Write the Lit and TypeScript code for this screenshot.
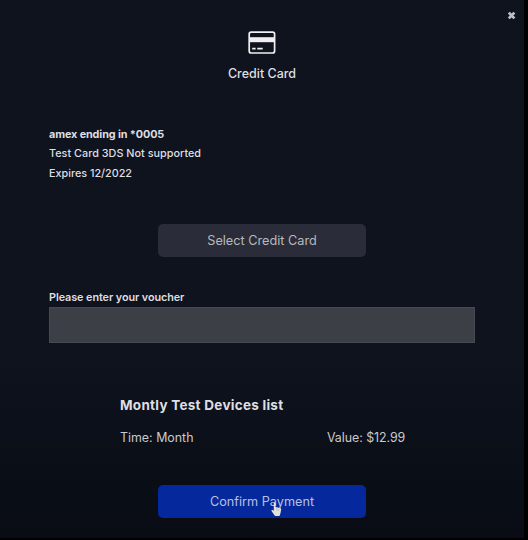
import { LitElement, html, css } from "lit";
import { customElement } from "lit/decorators.js";

@customElement("app-root")
export class AppRoot extends LitElement {
  static styles = css`
    :host {
      display: block;
      height: 540px;
      background: #000;
      font-family: Inter, "Open Sans", sans-serif;
      color: #dedfe2;
      overflow: hidden;
    }
    * {
      box-sizing: border-box;
    }
    .dialog {
      position: relative;
      display: flex;
      flex-direction: column;
      width: 524px;
      height: 538px;
      padding: 31px 49px 0;
      background: linear-gradient(#0f131e 0%, #0f131e 65%, #0a0e17 88%, #090c14 100%);
      white-space: nowrap;
    }
    .close {
      position: absolute;
      top: 11px;
      right: 8px;
      width: 9px;
      height: 9px;
      padding: 0;
      border: 0;
      background: none;
      color: #bfc0c4;
      display: flex;
    }
    .header {
      display: flex;
      flex-direction: column;
      align-items: center;
      height: 94px;
    }
    .title {
      margin-top: 10px;
      font-size: 12.5px;
      font-weight: 500;
      line-height: 18px;
    }
    .card {
      height: 99px;
      font-size: 10.8px;
      font-weight: 500;
      line-height: 19px;
    }
    .number {
      font-weight: 700;
      letter-spacing: -0.1px;
    }
    .holder {
      letter-spacing: 0.03px;
    }
    .expiry {
      margin-top: 1px;
    }
    .btn {
      align-self: center;
      display: flex;
      align-items: center;
      justify-content: center;
      flex: none;
      width: 208px;
      height: 33px;
      padding: 0;
      border: 0;
      border-radius: 5px;
      font: 400 12.7px/18px Inter, "Open Sans", sans-serif;
    }
    .select {
      padding-top: 1px;
      background: #2a2c39;
      color: #b9babd;
    }
    .confirm {
      position: relative;
      margin-top: 37px;
      background: #05289c;
      color: #b8c0e0;
    }
    .label {
      margin-top: 32px;
      font-size: 10.8px;
      font-weight: 600;
      line-height: 18px;
      letter-spacing: -0.06px;
    }
    .voucher {
      flex: none;
      width: 426px;
      height: 36px;
      padding: 0 10px;
      border: 1px solid #454950;
      border-radius: 0;
      background: #3c3f45;
      color: inherit;
    }
    .plan {
      margin: 52px 0 0 71px;
      height: 53px;
    }
    .plan-name {
      font-size: 13.5px;
      font-weight: 700;
      line-height: 20px;
      letter-spacing: 0.27px;
    }
    .plan-row {
      display: grid;
      grid-template-columns: 207px 1fr;
      margin-top: 14px;
      font-size: 12.4px;
      line-height: 18px;
      color: #c9cacd;
    }
    .value {
      letter-spacing: -0.05px;
    }
    .pointer {
      position: absolute;
      left: 113px;
      top: 17px;
    }
  `;

  render() {
    return html`
      <div class="dialog">
        <button class="close" aria-label="Close">
          <svg width="9" height="9" viewBox="0 0 9 9">
            <path d="M1.8 1.6l5.6 5.8M7.4 1.6l-5.6 5.8" stroke="currentColor" stroke-width="2.8" />
          </svg>
        </button>
        <div class="header">
          <svg width="28" height="24" viewBox="0 0 28 24">
            <rect x="1.2" y="1.2" width="25.4" height="20.8" rx="2" fill="none" stroke="#f0f0f2" stroke-width="1.7" />
            <rect x="1.5" y="6.2" width="25" height="5" fill="#f0f0f2" />
            <path d="M4.2 17.6h3.4M9.3 17.6h5.4" stroke="#f0f0f2" stroke-width="1.6" />
          </svg>
          <div class="title">Credit Card</div>
        </div>
        <div class="card">
          <div class="number">amex ending in *0005</div>
          <div class="holder">Test Card 3DS Not supported</div>
          <div class="expiry">Expires 12/2022</div>
        </div>
        <button class="btn select">Select Credit Card</button>
        <label class="label" for="voucher">Please enter your voucher</label>
        <input class="voucher" id="voucher" />
        <div class="plan">
          <div class="plan-name">Montly Test Devices list</div>
          <div class="plan-row"><span>Time: Month</span><span class="value">Value: $12.99</span></div>
        </div>
        <button class="btn confirm">
          <span>Confirm Payment</span>
          <svg class="pointer" width="11" height="15" viewBox="0 0 11 15">
            <path d="M2.8 1.1Q3.7 0 4.6 1.1V5L9 6Q10.3 6.4 10.1 8L9.4 11.5 8.5 14H4L1 9.8Q0 8 1 7.7L2.8 8.8Z" fill="#e2e2dc" />
            <path d="M5.8 6v3M7.7 6.4v2.8" stroke="#a9abad" stroke-width=".5" />
          </svg>
        </button>
      </div>
    `;
  }
}
